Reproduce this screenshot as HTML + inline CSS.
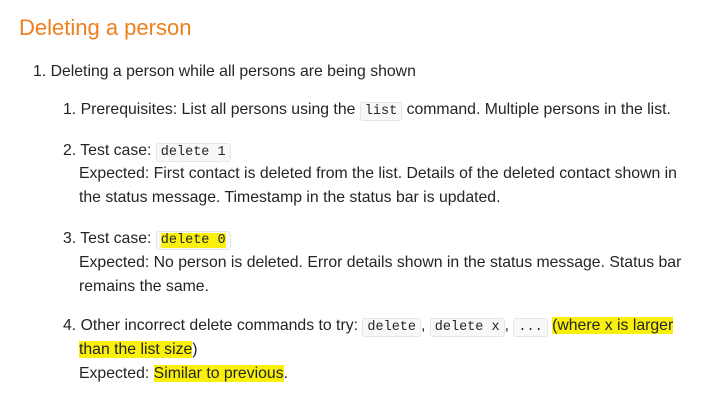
<!DOCTYPE html>
<html><head><meta charset="utf-8"><style>
body{margin:0;width:718px;height:400px;background:#fff;font-family:"Liberation Sans",sans-serif;color:#212529;font-size:15.8px;position:relative;overflow:hidden}
.l{position:absolute;white-space:nowrap;line-height:20px}
h1{position:absolute;left:19px;top:13px;margin:0;font-weight:normal;font-size:22px;color:#ef7f1a;line-height:30px}
code{font-family:"Liberation Mono",monospace;font-size:13.5px;background:#f8f8f8;border:1px solid #e6e6e6;border-radius:3px;padding:1px 4px}
.hl{background:#fbf00c}
</style></head><body>
<h1>Deleting a person</h1>
<div class="l" style="left:33px;top:62px">1. Deleting a person while all persons are being shown</div>
<div class="l" style="left:63px;top:100px">1. Prerequisites: List all persons using the <code>list</code> command. Multiple persons in the list.</div>
<div class="l" style="left:63px;top:141px">2. Test case: <code>delete 1</code></div>
<div class="l" style="left:79px;top:164px">Expected: First contact is deleted from the list. Details of the deleted contact shown in</div>
<div class="l" style="left:79px;top:188px">the status message. Timestamp in the status bar is updated.</div>
<div class="l" style="left:63px;top:229px">3. Test case: <code><span class="hl">delete 0</span></code></div>
<div class="l" style="left:79px;top:253px">Expected: No person is deleted. Error details shown in the status message. Status bar</div>
<div class="l" style="left:79px;top:277px">remains the same.</div>
<div class="l" style="left:63px;top:316px">4. Other incorrect delete commands to try: <code>delete</code>, <code>delete x</code>, <code>...</code> <span class="hl">(where x is larger</span></div>
<div class="l" style="left:79px;top:340px"><span class="hl">than the list size</span>)</div>
<div class="l" style="left:79px;top:364px">Expected: <span class="hl">Similar to previous</span>.</div>
</body></html>
